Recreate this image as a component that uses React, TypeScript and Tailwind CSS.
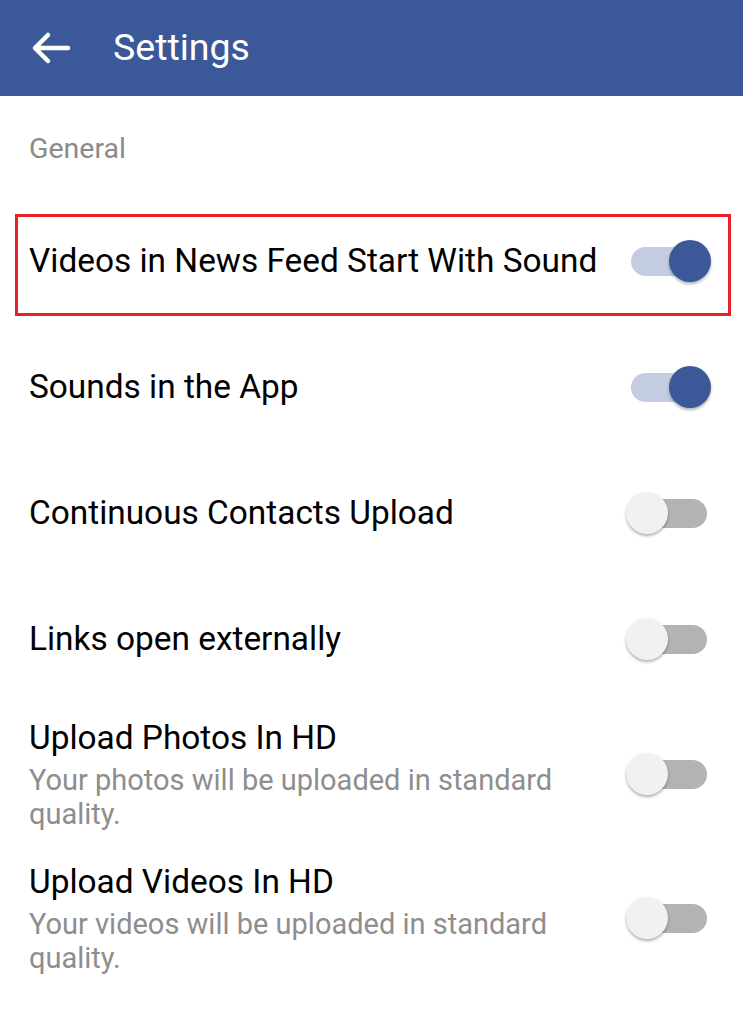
import React from "react";

type Item = {
  title: string;
  sub?: string;
  on: boolean;
};

const items: Item[] = [
  { title: "Sounds in the App", on: true },
  { title: "Continuous Contacts Upload", on: false },
  { title: "Links open externally", on: false },
];

const hdItems: Item[] = [
  {
    title: "Upload Photos In HD",
    sub: "Your photos will be uploaded in standard quality.",
    on: false,
  },
  {
    title: "Upload Videos In HD",
    sub: "Your videos will be uploaded in standard quality.",
    on: false,
  },
];

function Toggle({ on }: { on: boolean }) {
  return (
    <div className="relative w-[85px] h-[42px] flex-shrink-0">
      <div
        className={`absolute left-[5px] right-[4px] top-[7px] h-[29px] rounded-full ${
          on ? "bg-[#c3cce0]" : "bg-[#b3b3b3]"
        }`}
      />
      <div
        className={`absolute top-0 w-[42px] h-[42px] rounded-full shadow-[0_2px_3px_rgba(0,0,0,0.3)] ${
          on ? "right-0 bg-[#3b5998]" : "left-0 bg-[#f1f1f1]"
        }`}
      />
    </div>
  );
}

function BackArrow() {
  return (
    <svg width="44" height="40" viewBox="0 0 44 40" fill="none">
      <path
        d="M6 20H39M19 7L6 20L19 33"
        stroke="white"
        strokeWidth="4.5"
        strokeLinecap="round"
        strokeLinejoin="round"
      />
    </svg>
  );
}

export default function App() {
  return (
    <div className="w-[743px] h-[1024px] bg-white overflow-hidden font-['Roboto',sans-serif]">
      <header className="h-[96px] bg-[#3b5998] flex items-center">
        <div className="ml-[29px] w-[84px]">
          <BackArrow />
        </div>
        <h1 className="text-white text-[37.5px] leading-none">Settings</h1>
      </header>

      <div className="h-[102px] flex items-center px-[29px] pt-[4px]">
        <span className="text-[28.5px] text-[#8a8a8a]">General</span>
      </div>

      <div className="mt-[16px] mb-[8px] ml-[15px] mr-[12px] h-[102px] border-[3px] border-[#e8202a] flex items-center justify-between pl-[11px] pr-[17px] pb-[8px]">
        <span className="text-[33.4px] text-black leading-[40px]">
          Videos in News Feed Start With Sound
        </span>
        <Toggle on={true} />
      </div>

      {items.map((it) => (
        <div
          key={it.title}
          className="h-[126px] flex items-center justify-between pl-[29px] pr-[32px]"
        >
          <span className="text-[33.4px] text-black leading-[40px]">{it.title}</span>
          <Toggle on={it.on} />
        </div>
      ))}

      {hdItems.map((it) => (
        <div
          key={it.title}
          className="h-[144px] flex items-center justify-between pl-[29px] pr-[32px]"
        >
          <div className="w-[570px]">
            <div className="text-[33.4px] text-black leading-[40px]">{it.title}</div>
            <div className="mt-[5px] text-[29px] text-[#8e8e8e] leading-[34px]">
              {it.sub}
            </div>
          </div>
          <Toggle on={it.on} />
        </div>
      ))}
    </div>
  );
}
